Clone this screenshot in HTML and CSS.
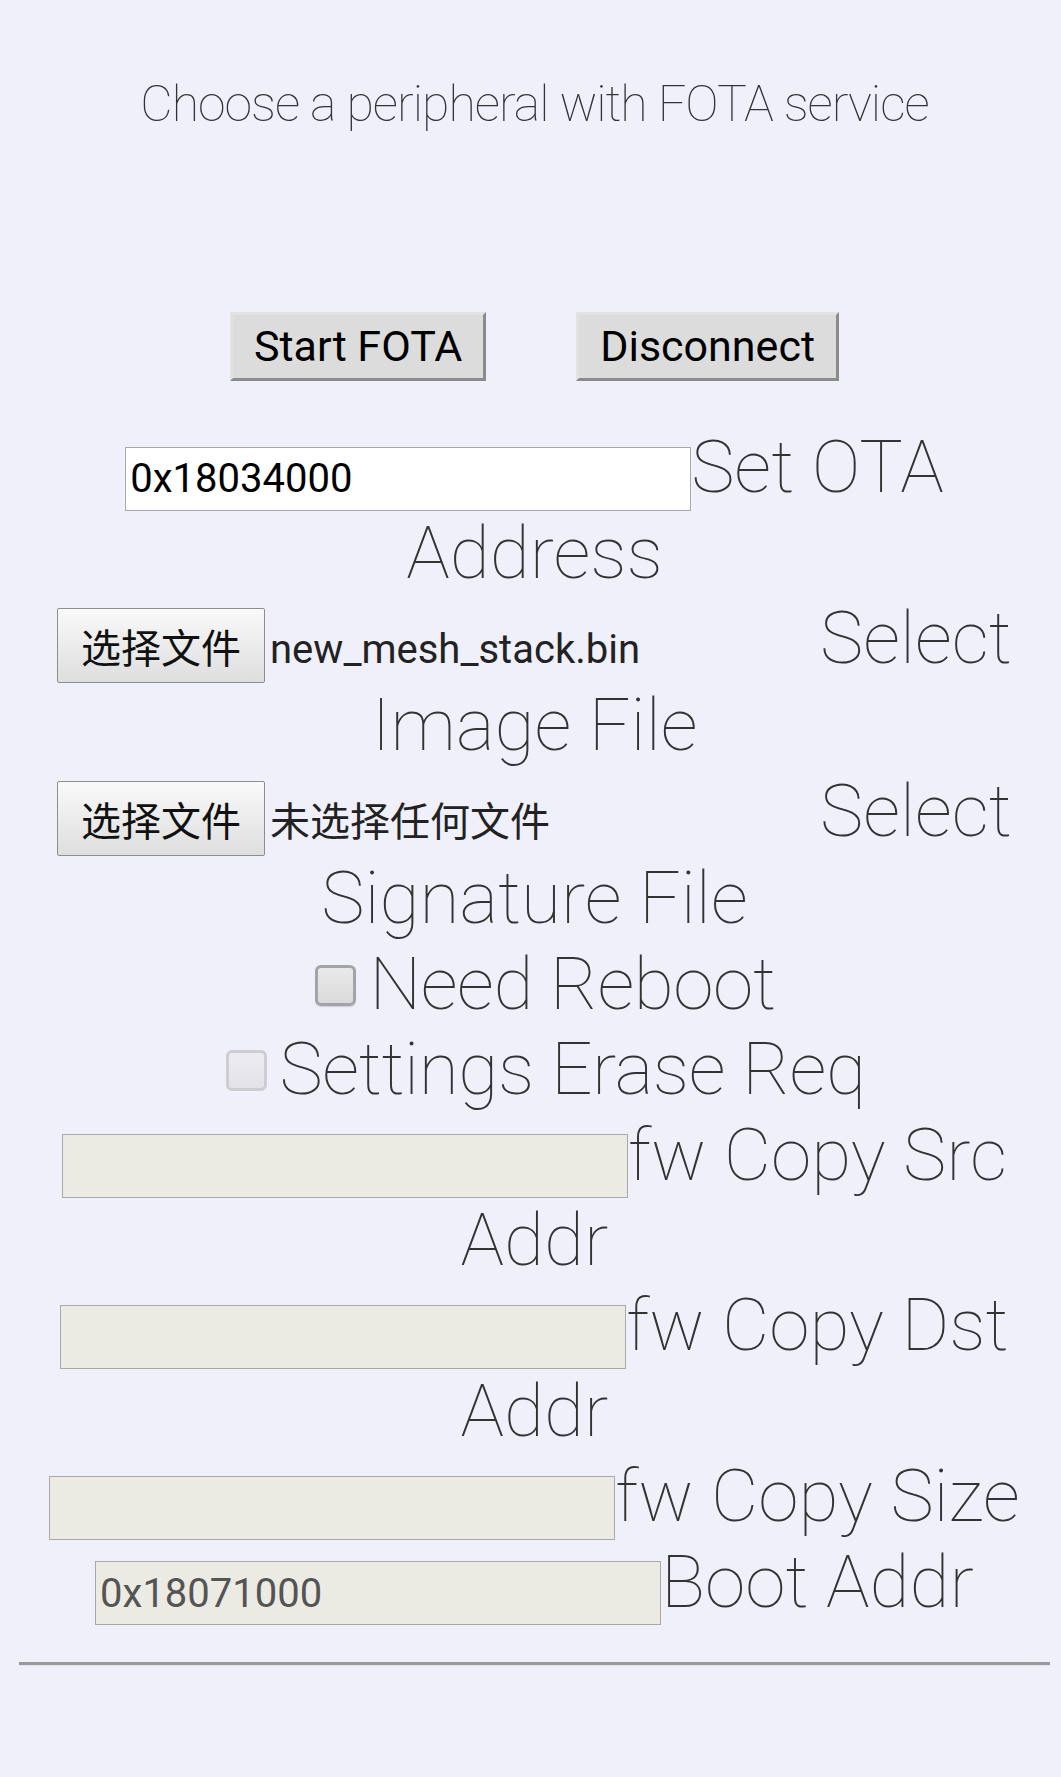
FILE: index.html
```html
<!DOCTYPE html>
<html lang="zh-CN">
<head>
<meta charset="utf-8">
<title>FOTA</title>
<link rel="stylesheet" href="styles.css">
</head>
<body>
<div class="title">Choose a peripheral with FOTA service</div>
<div class="actions">
  <button class="btn" type="button">Start FOTA</button>
  <button class="btn" type="button">Disconnect</button>
</div>
<div class="row row-first"><input class="field" type="text" value="0x18034000">Set OTA Address</div>
<div class="row"><span class="file"><span class="file-btn">选择文件</span><span class="file-name">new_mesh_stack.bin</span></span>Select Image File</div>
<div class="row"><span class="file"><span class="file-btn">选择文件</span><span class="file-name">未选择任何文件</span></span>Select Signature File</div>
<div class="row row-check"><input class="check" type="checkbox">Need Reboot</div>
<div class="row row-check"><input class="check check-off" type="checkbox" disabled>Settings Erase Req</div>
<div class="row"><input class="field field-off" type="text" disabled>fw Copy Src Addr</div>
<div class="row"><input class="field field-off" type="text" disabled>fw Copy Dst Addr</div>
<div class="row"><input class="field field-off" type="text" disabled>fw Copy Size</div>
<div class="row"><input class="field field-off" type="text" disabled value="0x18071000">Boot Addr</div>
<hr class="rule">
</body>
</html>
```

FILE: styles.css
```css
html {
  background: #f0f0fb;
}

body {
  margin: 8px 11px 8px 19px;
  background: #f0f0fb;
  font-family: Roboto, "Noto Sans CJK SC", sans-serif;
  color: #333;
}

.title {
  margin-top: 67px;
  text-align: center;
  font-size: 50px;
  line-height: 58px;
  font-weight: 100;
  letter-spacing: -1px;
  color: #333;
}

.actions {
  display: flex;
  justify-content: center;
  gap: 90px;
  margin-top: 179px;
}

.btn {
  font-family: Roboto, sans-serif;
  font-size: 43px;
  font-weight: 400;
  line-height: 49px;
  padding: 7px 21px;
  border: 3px solid;
  border-color: #e2e2e2 #8b8b8b #8b8b8b #e2e2e2;
  background: #dcdcdc;
  color: #000;
  border-radius: 0;
}

.row {
  text-align: center;
  font-size: 73px;
  line-height: 85.4px;
  font-weight: 100;
  color: #333;
}

.row-first {
  margin-top: 44px;
}

.field {
  box-sizing: border-box;
  width: 566px;
  height: 64px;
  margin: 0;
  padding: 0 4px;
  border: 1px solid #a9a9a9;
  background: #fff;
  font-family: Roboto, sans-serif;
  font-size: 40px;
  font-weight: 400;
  line-height: normal;
  color: #000;
  vertical-align: baseline;
  outline: none;
}

.field-off {
  background: #ebebe4;
  color: #545454;
}

.file {
  display: inline-block;
  width: 763px;
  text-align: left;
  white-space: nowrap;
  font-size: 40px;
  line-height: normal;
  font-weight: 400;
  color: #222;
}

.file-btn {
  display: inline-block;
  padding: 7.5px 23px;
  border: 1px solid #8d8d8d;
  border-radius: 2px;
  background: linear-gradient(#f9f9f9, #dedede);
  font-family: "Noto Sans CJK SC", sans-serif;
  color: #111;
}

.file-name {
  margin-left: 5px;
}

.row-check {
  padding-left: 18px;
  letter-spacing: -0.4px;
}

.check {
  -webkit-appearance: none;
  appearance: none;
  box-sizing: border-box;
  width: 41px;
  height: 41px;
  margin: 0 13px 3px 4px;
  border: 3px solid #a3a3a8;
  border-radius: 6px;
  background: linear-gradient(#e9e9e9, #dadada);
  box-shadow: 0 1px 1px rgba(0, 0, 0, 0.15);
  vertical-align: baseline;
}

.check-off {
  border-color: #cdcdd2;
  background: linear-gradient(#ececf2, #e2e2e8);
  box-shadow: none;
}

.rule {
  height: 0;
  margin: 37px 0 0 0;
  border: 0;
  border-top: 3px solid #9a9a9e;
  border-bottom: 1px solid #e2e2ea;
}
```
